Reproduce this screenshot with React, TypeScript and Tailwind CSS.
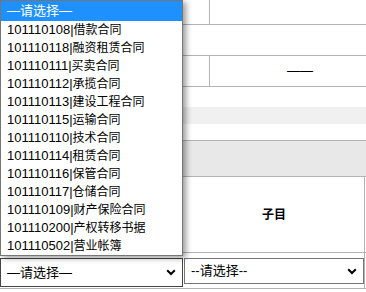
import React from "react";

const options = [
  { code: "101110108", name: "借款合同" },
  { code: "101110118", name: "融资租赁合同" },
  { code: "101110111", name: "买卖合同" },
  { code: "101110112", name: "承揽合同" },
  { code: "101110113", name: "建设工程合同" },
  { code: "101110115", name: "运输合同" },
  { code: "101110110", name: "技术合同" },
  { code: "101110114", name: "租赁合同" },
  { code: "101110116", name: "保管合同" },
  { code: "101110117", name: "仓储合同" },
  { code: "101110109", name: "财产保险合同" },
  { code: "101110200", name: "产权转移书据" },
  { code: "101110502", name: "营业帐簿" },
];

function Chevron() {
  return (
    <svg width="10" height="7" viewBox="0 0 10 7" className="shrink-0">
      <path d="M1.2 1.2 L5 5 L8.8 1.2" fill="none" stroke="#000" strokeWidth="2" />
    </svg>
  );
}

function FakeSelect({ label, className }: { label: string; className: string }) {
  return (
    <div className={`flex items-center justify-between bg-white pl-[6px] pr-[6px] text-[13px] text-black ${className}`}>
      <span>{label}</span>
      <Chevron />
    </div>
  );
}

export default function App() {
  const line = "border-[#b4b4b4]";
  return (
    <div className="relative w-[366px] h-[292px] overflow-hidden bg-white font-['Liberation_Sans','Noto_Sans_CJK_SC',sans-serif]">
      {/* table behind the open list */}
      <div className={`flex h-[25px] border-b ${line}`}>
        <div className={`w-[210px] border-r ${line}`} />
        <div className="flex-1" />
      </div>
      <div className={`h-[31px] border-b ${line}`} />
      <div className={`flex h-[31px] border-b ${line}`}>
        <div className={`w-[210px] border-r ${line}`} />
        <div className="flex-1 flex items-center pl-[77px] text-[13px] text-black">——</div>
      </div>
      <div className="h-[20px]" />
      <div className="h-[17px] bg-[#f0f0f0]" />
      <div className={`h-[17px] border-b ${line}`} />
      <div className={`h-[36px] bg-[#e8e8e8] border-b ${line}`} />
      <div className={`flex h-[76px] border-b ${line}`}>
        <div className="w-[184px]" />
        <div className={`w-[181px] border-r ${line} flex items-center justify-center text-[12px] font-bold text-black`}>
          子目
        </div>
      </div>
      <div className={`flex h-[36px] border-b ${line}`}>
        <div className="w-[184px] pt-[5px]">
          <FakeSelect label="—请选择—" className="w-[183px] h-[29px] border border-[#444]" />
        </div>
        <div className={`w-[181px] border-r ${line} pt-[5px]`}>
          <FakeSelect label="--请选择--" className="w-[180px] h-[26px] border border-[#767676]" />
        </div>
      </div>

      {/* open dropdown list */}
      <div className="absolute left-0 top-0 w-[183px] h-[256px] bg-white border border-[#767676] shadow-[3px_2px_6px_rgba(0,0,0,0.4)] text-[13px] text-black">
        <div className="h-[20px] bg-[#1e90ff] text-white flex items-center pl-[6px]">—请选择—</div>
        {options.map((o) => (
          <div key={o.code} className="h-[18px] flex items-center pl-[6px] whitespace-nowrap">
            {o.code}|<span className="text-[12px]">{o.name}</span>
          </div>
        ))}
      </div>
    </div>
  );
}
